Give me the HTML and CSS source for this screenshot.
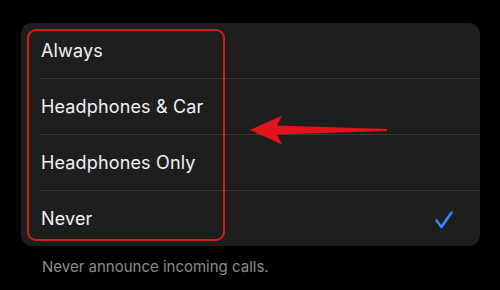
FILE: index.html
```html
<!DOCTYPE html>
<html>
<head>
<meta charset="utf-8">
<link rel="stylesheet" href="styles.css">
</head>
<body>
<div class="page">
  <div class="card">
    <div class="row"><span class="label">Always</span></div>
    <div class="row sep"><span class="label">Headphones &amp; Car</span></div>
    <div class="row sep"><span class="label">Headphones Only</span></div>
    <div class="row sep"><span class="label">Never</span>
      <svg class="check" width="20" height="20" viewBox="0 0 20 20"><path d="M2.5 10.5 L7.5 17 L17.5 2.5" fill="none" stroke="#3a82f6" stroke-width="2.6" stroke-linecap="round" stroke-linejoin="round"/></svg>
    </div>
    <div class="highlight"></div>
    <svg class="arrow" width="140" height="32" viewBox="0 0 140 32"><polygon points="0,16 32,1.5 27,11.5 137,15 137,17 27,20.5 32,30.5" fill="#e3131b"/></svg>
  </div>
  <p class="footer">Never announce incoming calls.</p>
</div>
</body>
</html>
```
FILE: styles.css
```css
html, body { margin: 0; padding: 0; background: #000; }
body { font-family: Inter, "Noto Sans", sans-serif; width: 500px; height: 290px; overflow: hidden; }
.page { padding: 23px 20px 0 21px; }
.card {
  position: relative;
  background: #1e1e1f;
  border-radius: 11px;
  width: 459px;
  height: 223px;
  display: flex;
  flex-direction: column;
}
.row {
  height: 56px;
  margin-left: 19px;
  padding-left: 1px;
  padding-right: 26px;
  display: flex;
  align-items: center;
  justify-content: space-between;
  box-sizing: border-box;
}
.row:first-child { height: 55px; }
.sep { border-top: 1px solid #38383a; }
.label { color: #f2f2f4; font-size: 18px; letter-spacing: 0.15px; }
.check { display: block; margin-top: 2px; }
.highlight {
  position: absolute;
  left: 6px; top: 6px;
  width: 198px; height: 212px;
  border: 2.5px solid #d21d1f;
  border-radius: 9px;
  box-sizing: border-box;
}
.arrow { position: absolute; left: 229px; top: 91px; }
.footer {
  margin: 11px 0 0 21px;
  color: #8c8c90;
  font-size: 15px;
}
```
